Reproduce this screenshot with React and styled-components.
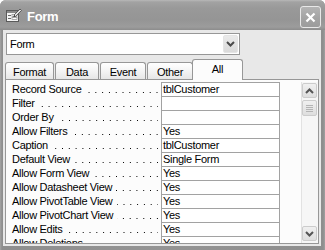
import styled, { createGlobalStyle } from "styled-components";

const GlobalStyle = createGlobalStyle`
  html, body {
    margin: 0;
    padding: 0;
    background: #ffffff;
  }
  body {
    font-family: "Liberation Sans", Arial, sans-serif;
  }
  * {
    box-sizing: border-box;
  }
`;

const Window = styled.div`
  width: 325px;
  height: 250px;
  display: flex;
  flex-direction: column;
  background: linear-gradient(to right, #a4a4a4 0, #8e8e8e 2px, #949494 50%, #8e8e8e calc(100% - 2px), #a0a0a0 100%);
  border-radius: 6px 6px 0 0;
  overflow: hidden;
`;

const TitleBar = styled.div`
  height: 30px;
  flex-shrink: 0;
  display: flex;
  align-items: center;
  padding: 0 4px 0 6px;
  background: linear-gradient(
    to bottom,
    #b8b8b8 0,
    #a2a2a2 2px,
    #999999 8px,
    #959595 20px,
    #9c9c9c 27px,
    #8c8c8c 30px
  );
`;

const TitleIcon = styled.svg`
  width: 16px;
  height: 16px;
  margin-top: -1px;
  flex-shrink: 0;
`;

const TitleText = styled.span`
  margin-left: 5px;
  padding-top: 3px;
  color: #ffffff;
  font-weight: bold;
  font-size: 13px;
  letter-spacing: -0.3px;
  flex: 1;
`;

const CloseButton = styled.div`
  align-self: flex-start;
  margin-top: 6px;
  width: 21px;
  height: 22px;
  border: 1px solid #e8e8e8;
  border-radius: 3px;
  background: linear-gradient(to bottom, #b4b4b4, #a2a2a2 60%, #9c9c9c);
  display: flex;
  align-items: center;
  justify-content: center;
`;

const Body = styled.div`
  flex: 1;
  margin: 0 4px 4px 3px;
  background: #e8e8e8;
  display: flex;
  flex-direction: column;
  padding-top: 3px;
  font-size: 11px;
  letter-spacing: -0.3px;
`;

const Combo = styled.div`
  margin-left: 3px;
  width: 234px;
  height: 22px;
  border: 1px solid #979797;
  background: #ffffff;
  display: flex;
  align-items: stretch;
  padding: 1px;
`;

const ComboText = styled.div`
  flex: 1;
  padding-left: 2px;
  line-height: 19px;
  color: #000;
`;

const ComboButton = styled.div`
  width: 15px;
  border: 1px solid #e4e4e4;
  border-radius: 2px;
  background: linear-gradient(to bottom, #eaeaea, #dadada);
  display: flex;
  align-items: center;
  justify-content: center;
`;

const TabRow = styled.div`
  margin-top: 4px;
  margin-left: 2px;
  height: 20px;
  display: flex;
  align-items: flex-end;
  gap: 1px;
`;

const Tab = styled.div`
  position: relative;
  z-index: ${(p) => (p.$active ? 1 : 0)};
  width: ${(p) => p.$w}px;
  height: ${(p) => (p.$active ? 21 : 17)}px;
  margin-left: ${(p) => (p.$active ? -2 : 0)}px;
  margin-bottom: ${(p) => (p.$active ? -1 : 0)}px;
  border: 1px solid #979797;
  border-bottom: none;
  border-radius: 3px 3px 0 0;
  background: ${(p) =>
    p.$active
      ? "#fcfcfc"
      : "linear-gradient(to bottom, #ffffff, #f4f4f4 50%, #e6e6e6)"};
  padding-top: 3px;
  line-height: 13px;
  text-align: center;
  color: #000;
`;

const Panel = styled.div`
  margin-left: 2px;
  width: 314px;
  height: 165px;
  border: 1px solid #979797;
  background: #fcfcfc;
  display: flex;
  padding-top: 2px;
  overflow: hidden;
`;

const List = styled.div`
  flex: 1;
  display: flex;
  flex-direction: column;
  overflow: hidden;
`;

const Value = styled.div`
  width: 119px;
  flex-shrink: 0;
  background: #ffffff;
  border: 1px solid #a2a2a2;
  border-top: none;
  padding-left: 1px;
  white-space: nowrap;
  overflow: hidden;
`;

const Name = styled.div`
  width: 155px;
  flex-shrink: 0;
  display: flex;
  padding: 0 3px 0 6px;
  border-bottom: 1px solid transparent;
  white-space: nowrap;
`;

const Row = styled.div`
  display: flex;
  flex-shrink: 0;
  line-height: 13px;
  color: #000;

  &:first-child ${Value}, &:first-child ${Name} {
    border-top: 1px solid #a2a2a2;
  }
  &:first-child ${Name} {
    border-top-color: transparent;
  }
`;

const Leader = styled.span`
  flex: 1;
  margin-left: 4px;
  background-image: linear-gradient(to right, #000 1px, transparent 1px);
  background-size: 6.8px 1px;
  background-repeat: repeat-x;
  background-position: right 1px bottom 3px;
`;

const ScrollBar = styled.div`
  width: 17px;
  flex-shrink: 0;
  display: flex;
  flex-direction: column;
  padding: 1px 1px 2px 0;
  border-left: 1px solid #e2e2e2;
  background: #f6f6f6;
`;

const ScrollButton = styled.div`
  height: 15px;
  flex-shrink: 0;
  border: 1px solid #cccccc;
  border-radius: 2px;
  background: linear-gradient(to bottom, #f0f0f0, #dedede);
  display: flex;
  align-items: center;
  justify-content: center;
`;

const Thumb = styled(ScrollButton)`
  height: 16px;
  margin-top: 2px;
  flex-direction: column;
  gap: 1px;
`;

const Grip = styled.div`
  width: 7px;
  height: 1px;
  background: #b4b4b4;
`;

const Track = styled.div`
  flex: 1;
`;

const rows = [
  ["Record Source", "tblCustomer"],
  ["Filter", ""],
  ["Order By", ""],
  ["Allow Filters", "Yes"],
  ["Caption", "tblCustomer"],
  ["Default View", "Single Form"],
  ["Allow Form View", "Yes"],
  ["Allow Datasheet View", "Yes"],
  ["Allow PivotTable View", "Yes"],
  ["Allow PivotChart View", "Yes"],
  ["Allow Edits", "Yes"],
  ["Allow Deletions", "Yes"],
];

const tabs = [
  ["Format", 49],
  ["Data", 44],
  ["Event", 46],
  ["Other", 46],
  ["All", 51],
];

function Chevron({ up, color = "#555" }) {
  return (
    <svg width="9" height="6" viewBox="0 0 9 6">
      <path
        d={up ? "M1 5 L4.5 1.5 L8 5" : "M1 1 L4.5 4.5 L8 1"}
        fill="none"
        stroke={color}
        strokeWidth="2"
      />
    </svg>
  );
}

function FormIcon() {
  return (
    <TitleIcon viewBox="0 0 16 16">
      <rect x="0.5" y="3.5" width="12" height="11" fill="#f4f4f4" stroke="#5a5a5a" />
      <rect x="1" y="4" width="11" height="2" fill="#8a8a8a" />
      <rect x="2" y="8" width="3" height="1" fill="#6a6a6a" />
      <rect x="6" y="7.5" width="5" height="2" fill="#ffffff" stroke="#7a7a7a" strokeWidth="0.6" />
      <rect x="2" y="11" width="3" height="1" fill="#6a6a6a" />
      <rect x="6" y="10.5" width="5" height="2" fill="#ffffff" stroke="#7a7a7a" strokeWidth="0.6" />
      <path d="M8 8 L14 2 L15.5 3.5 L9.5 9.5 Z" fill="#e0e0e0" stroke="#444" strokeWidth="0.8" />
      <path d="M8 8 L7.3 10.2 L9.5 9.5 Z" fill="#333" />
    </TitleIcon>
  );
}

export default function App() {
  return (
    <>
      <GlobalStyle />
      <Window>
        <TitleBar>
          <FormIcon />
          <TitleText>Form</TitleText>
          <CloseButton>
            <svg width="11" height="11" viewBox="0 0 11 11">
              <path d="M1.5 1.5 L9.5 9.5 M9.5 1.5 L1.5 9.5" stroke="#ffffff" strokeWidth="2.2" />
            </svg>
          </CloseButton>
        </TitleBar>
        <Body>
          <Combo>
            <ComboText>Form</ComboText>
            <ComboButton>
              <Chevron color="#4a4a4a" />
            </ComboButton>
          </Combo>
          <TabRow>
            {tabs.map(([label, w]) => (
              <Tab key={label} $w={w} $active={label === "All"}>
                {label}
              </Tab>
            ))}
          </TabRow>
          <Panel>
            <List>
              {rows.map(([name, value]) => (
                <Row key={name}>
                  <Name>
                    <span>{name}</span>
                    <Leader />
                  </Name>
                  <Value>{value}</Value>
                </Row>
              ))}
            </List>
            <ScrollBar>
              <ScrollButton>
                <Chevron up />
              </ScrollButton>
              <Thumb>
                <Grip />
                <Grip />
                <Grip />
                <Grip />
              </Thumb>
              <Track />
              <ScrollButton>
                <Chevron />
              </ScrollButton>
            </ScrollBar>
          </Panel>
        </Body>
      </Window>
    </>
  );
}
